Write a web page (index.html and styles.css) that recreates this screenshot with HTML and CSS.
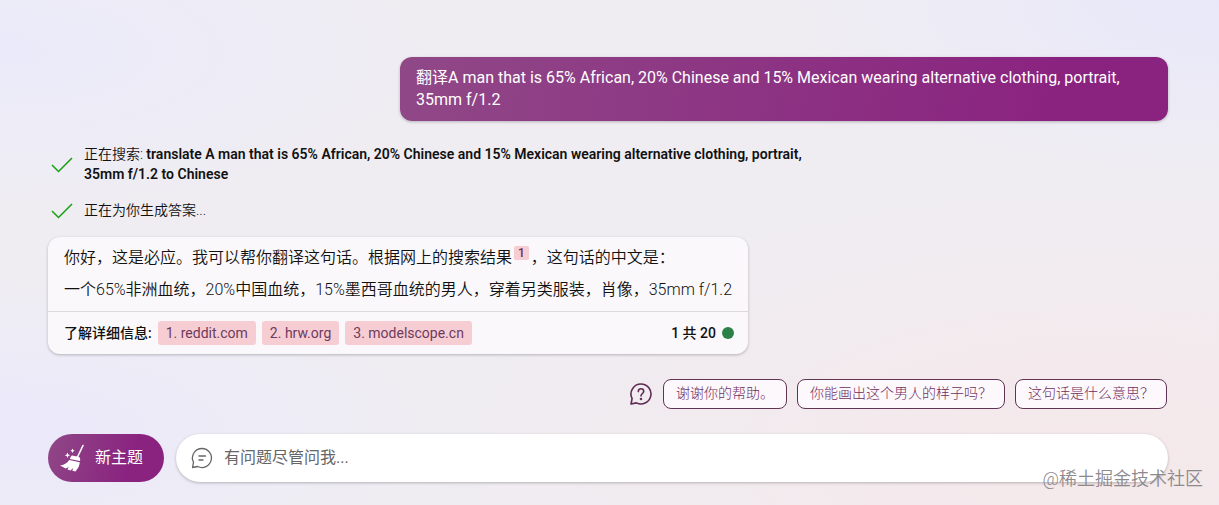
FILE: index.html
```html
<!DOCTYPE html>
<html lang="zh-CN">
<head>
    <meta charset="UTF-8">
    <meta name="viewport" content="width=device-width, initial-scale=1.0">
    <title>必应聊天</title>
    <link rel="stylesheet" href="styles.css">
</head>
<body>
    <main class="chat">
        <div class="message message--user">翻译A man that is 65% African, 20% Chinese and 15% Mexican wearing alternative clothing, portrait, 35mm f/1.2</div>

        <ul class="steps">
            <li class="step">
                <svg class="step__check" viewBox="0 0 24 20"><path d="M2 11l6.500 6.500L22 4"/></svg>
                <span>正在搜索: <b>translate A man that is 65% African, 20% Chinese and 15% Mexican wearing alternative clothing, portrait, 35mm f/1.2 to Chinese</b></span>
            </li>
            <li class="step">
                <svg class="step__check" viewBox="0 0 24 20"><path d="M2 11l6.500 6.500L22 4"/></svg>
                <span>正在为你生成答案...</span>
            </li>
        </ul>

        <article class="answer">
            <div class="answer__text">
                <p>你好，这是必应。我可以帮你翻译这句话。根据网上的搜索结果<sup><a class="cite" href="#source-1">1</a></sup>，这句话的中文是：</p>
                <p>一个65%非洲血统，20%中国血统，15%墨西哥血统的男人，穿着另类服装，肖像，35mm f/1.2</p>
            </div>
            <footer class="answer__footer">
                <span class="answer__label">了解详细信息:</span>
                <a class="source" id="source-1" href="#">1. reddit.com</a>
                <a class="source" href="#">2. hrw.org</a>
                <a class="source" href="#">3. modelscope.cn</a>
                <span class="counter">1 共 20</span>
            </footer>
        </article>

        <div class="suggestions">
            <svg class="suggestions__icon" viewBox="0 0 24 24">
                <path d="M12 2a10 10 0 1 1-4.600 18.900L2 22l1.100-5.400A10 10 0 0 1 12 2z"/>
                <path d="M9.300 9.600c0-1.700 1.200-2.800 2.700-2.800s2.700 1.100 2.700 2.600c0 2-2.700 2.300-2.700 4.600"/>
                <circle cx="12" cy="17" r=".5"/>
            </svg>
            <button class="suggestion" type="button">谢谢你的帮助。</button>
            <button class="suggestion" type="button">你能画出这个男人的样子吗？</button>
            <button class="suggestion" type="button">这句话是什么意思？</button>
        </div>

        <form class="composer">
            <button class="new-topic" type="button">
                <svg class="new-topic__icon" viewBox="0 0 28 28">
                    <path class="handle" d="M25 1.500l-5.500 11.500"/>
                    <path d="M14 11.500l6.500 1.300c1.500.5 2 2 1.500 4.200L11.800 15c.4-1.600 1.200-2.800 2.200-3.500z"/>
                    <path d="M11.300 16l10.500 2.300c-.3 3.500-1.800 6.500-4.300 9.200l-3.200-.8 1-2.700-2.800 2.400-3-1 1.200-2.400-3 1.600-5.700-3.200c3.800-.3 7-2 9.300-5.400z"/>
                    <path d="M9.500 8.500l.8 2 2 .8-2 .8-.8 2-.8-2-2-.8 2-.8zM14.500 4.500l.7 1.500 1.500.7-1.500.7-.7 1.500-.7-1.500-1.500-.7 1.500-.7z"/>
                </svg>
                新主题
            </button>
            <label class="ask">
                <svg class="ask__icon" viewBox="0 0 24 24">
                    <path d="M12 2.500a9.500 9.500 0 1 1-4.300 18L2.500 21.500l1-5.200A9.500 9.500 0 0 1 12 2.500z"/>
                    <path d="M9 10h6.500M9 14h4"/>
                </svg>
                <input class="ask__input" type="text" placeholder="有问题尽管问我..." aria-label="有问题尽管问我">
            </label>
        </form>
    </main>
    <div class="watermark">@稀土掘金技术社区</div>
</body>
</html>
```

FILE: styles.css
```css
* {
    box-sizing: border-box;
}

body {
    position: relative;
    margin: 0;
    min-height: 100vh;
    background:
        radial-gradient(ellipse at 100% 0, #e9e8fa, transparent 25%),
        radial-gradient(ellipse at 0 10%, #ebeafa, transparent 25%),
        radial-gradient(ellipse at 0 85%, #ebe9fb, transparent 25%),
        radial-gradient(ellipse at 90% 90%, #f5e8ea, transparent 45%),
        #efedf2;
    color: #111;
    font: 16px/32px Roboto, "Noto Sans CJK SC", sans-serif;
}

button,
input {
    font: inherit;
}

a {
    text-decoration: none;
}

svg {
    flex: none;
    fill: none;
    stroke: currentColor;
    stroke-linecap: round;
    stroke-linejoin: round;
}

.chat {
    display: flex;
    flex-direction: column;
    align-items: flex-start;
    padding: 57px 51px 23px 48px;
}

.message {
    max-width: 768px;
    padding: 10px 16px;
    border-radius: 12px;
    line-height: 22px;
}

.message--user {
    align-self: flex-end;
    background: linear-gradient(100deg, #904887, #8a2380 85%);
    box-shadow: 0 1px 3px rgba(0, 0, 0, .25);
    color: #fff;
}

.steps {
    display: flex;
    flex-direction: column;
    gap: 16px;
    max-width: 768px;
    margin: 23px 0 17px;
    padding: 0 0 0 2px;
    list-style: none;
    font-size: 14px;
    font-weight: 350;
    line-height: 20px;
}

.step {
    display: flex;
    align-items: center;
    gap: 10px;
}

.step b {
    font-weight: 600;
}

.step__check {
    width: 24px;
    height: 20px;
    stroke: #13a10e;
    stroke-width: 1.500;
    stroke-linecap: butt;
    stroke-linejoin: miter;
}

.answer {
    border-radius: 12px;
    background: #faf8fb;
    box-shadow: 0 1px 3px rgba(0, 0, 0, .25);
    font-weight: 350;
}

.answer__text {
    padding: 5px 16px;
}

.answer p {
    margin: 0;
}

.answer sup {
    line-height: 0;
}

.cite {
    margin: 0 2px;
    padding: 0 4px;
    border-radius: 2px;
    background: #f5cdd3;
    color: #6a2b5c;
    font-size: 12px;
    font-weight: 500;
}

.answer__footer {
    display: flex;
    align-items: center;
    gap: 6px;
    padding: 9px 14px 9px 16px;
    border-top: 1px solid #dcdadd;
    font-size: 14px;
    line-height: 24px;
}

.answer__label,
.counter {
    font-weight: 500;
}

.source {
    padding: 0 8px;
    border-radius: 3px;
    background: #f6cdd2;
    color: #6f3a61;
    font-weight: 400;
}

.counter {
    display: flex;
    align-items: center;
    gap: 6px;
    margin-left: auto;
}

.counter::after {
    width: 12px;
    height: 12px;
    border-radius: 50%;
    background: #2b8148;
    content: '';
}

.suggestions {
    display: flex;
    flex-wrap: wrap;
    align-items: center;
    align-self: flex-end;
    gap: 10px;
    margin: 25px 1px 25px 0;
}

.suggestions__icon {
    width: 24px;
    height: 24px;
    color: #5f2855;
    stroke-width: 1.600;
}

.suggestion {
    padding: 3px 12px 5px;
    border: 1px solid #5f3455;
    border-radius: 8px;
    background: #fdf8fb;
    color: #6d2f62;
    font-size: 14px;
    font-weight: 300;
    line-height: 20px;
}

.composer {
    display: flex;
    gap: 12px;
    width: 100%;
}

.new-topic {
    display: flex;
    flex: none;
    align-items: center;
    gap: 9px;
    height: 48px;
    padding: 0 21px 0 10px;
    border: 0;
    border-radius: 24px;
    background: linear-gradient(110deg, #904887, #8a2380 70%);
    color: #fff;
}

.new-topic__icon {
    width: 28px;
    height: 28px;
    fill: #fff;
    stroke: none;
}

.new-topic .handle {
    stroke: #fff;
    stroke-width: 1.600;
}

.ask {
    display: flex;
    flex: 1;
    align-items: center;
    gap: 10px;
    padding: 0 14px;
    border-radius: 24px;
    background: #fff;
    box-shadow: 0 1px 3px rgba(0, 0, 0, .25);
}

.ask__icon {
    width: 24px;
    height: 24px;
    color: #666;
    stroke-width: 1.300;
}

.ask__input {
    flex: 1;
    min-width: 0;
    padding: 0;
    border: 0;
    outline: 0;
    background: none;
}

.ask__input::placeholder {
    color: #666;
    opacity: 1;
}

.watermark {
    position: absolute;
    right: 16px;
    bottom: 10px;
    color: #8d8a8e;
    font-size: 18px;
    font-weight: 350;
    pointer-events: none;
}
```
